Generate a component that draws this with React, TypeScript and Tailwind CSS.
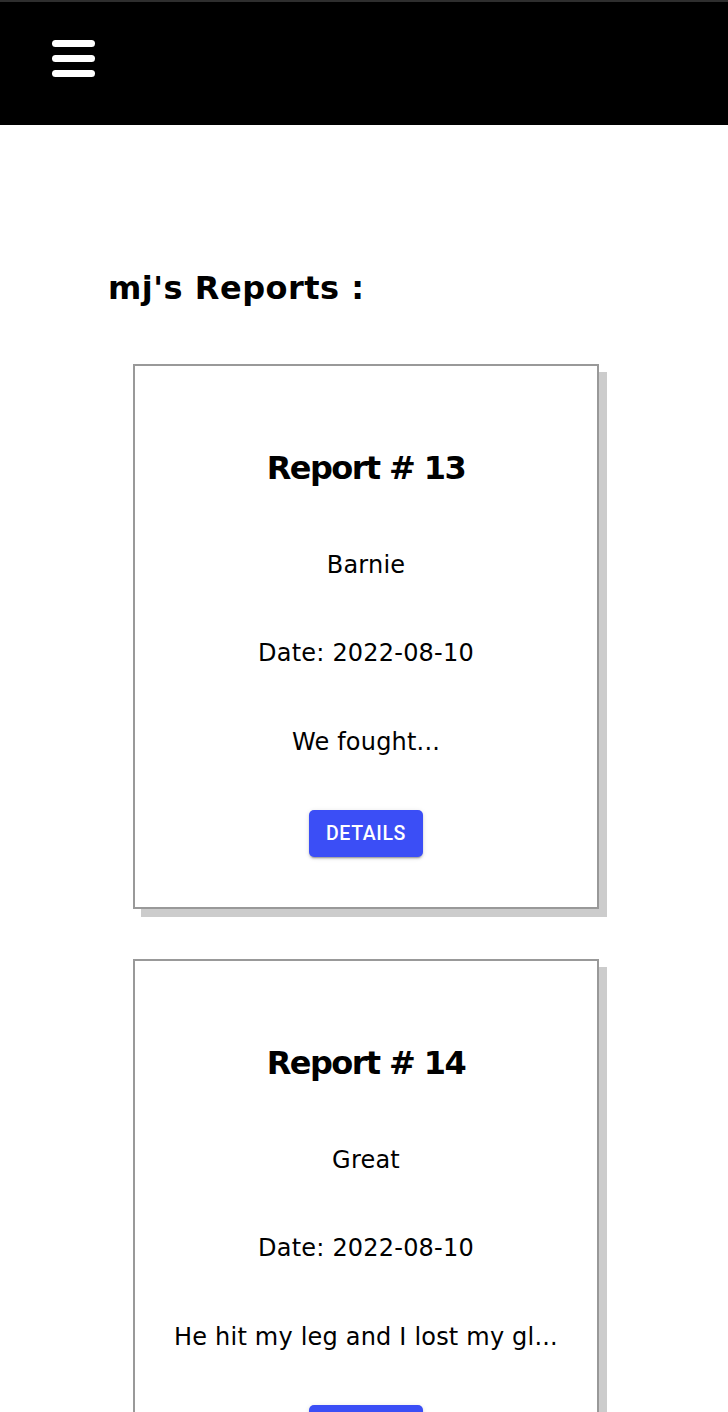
import React from 'react';

interface Report {
  id: number;
  title: string;
  date: string;
  summary: string;
}

const reports: Report[] = [
  { id: 13, title: 'Barnie', date: '2022-08-10', summary: 'We fought...' },
  { id: 14, title: 'Great', date: '2022-08-10', summary: 'He hit my leg and I lost my gl...' },
];

function ReportCard({ report }: { report: Report }) {
  return (
    <div className="ml-[133px] w-[466px] h-[545px] border-2 border-[#999999] bg-white shadow-[8px_8px_0_#cccccc] flex flex-col items-center pt-[82px]">
      <h2 className="text-[32px] leading-[40px] font-bold tracking-[-1.6px]">Report # {report.id}</h2>
      <p className="mt-[57px] text-[24px] leading-[40px] tracking-[0.2px]">{report.title}</p>
      <p className="mt-[48px] text-[24px] leading-[40px] tracking-[0.2px]">Date: {report.date}</p>
      <p className="mt-[49px] text-[24px] leading-[40px] tracking-[0.2px]">{report.summary}</p>

      <button className="mt-[48px] h-[47px] px-[17px] rounded-[5px] bg-[#3b4ef6] text-white text-[19.5px] font-medium tracking-[0.6px] uppercase font-['Roboto',sans-serif] shadow-[0_3px_1px_-2px_rgba(0,0,0,0.2),0_2px_2px_0_rgba(0,0,0,0.14),0_1px_5px_0_rgba(0,0,0,0.12)]">
        Details
      </button>
    </div>
  );
}

export default function App() {
  return (
    <div className="min-h-screen bg-white text-black font-['DejaVu_Sans',sans-serif]">
      {/* Top bar */}
      <header className="h-[125px] bg-black border-t-2 border-[#2e2e2e] pl-[52px] pt-[38px]">
        <div className="flex flex-col gap-2 w-[43px]">
          <span className="h-[7px] rounded-full bg-white"></span>
          <span className="h-[7px] rounded-full bg-white"></span>
          <span className="h-[7px] rounded-full bg-white"></span>
        </div>
      </header>

      <main className="pt-[145px] pb-[60px]">
        <h1 className="pl-[108px] text-[32px] leading-[37px] font-bold tracking-[0.5px]">mj's Reports :</h1>

        <div className="mt-[57px] flex flex-col gap-[50px]">
          {reports.map((r) => (
            <ReportCard key={r.id} report={r} />
          ))}
        </div>
      </main>
    </div>
  );
}
